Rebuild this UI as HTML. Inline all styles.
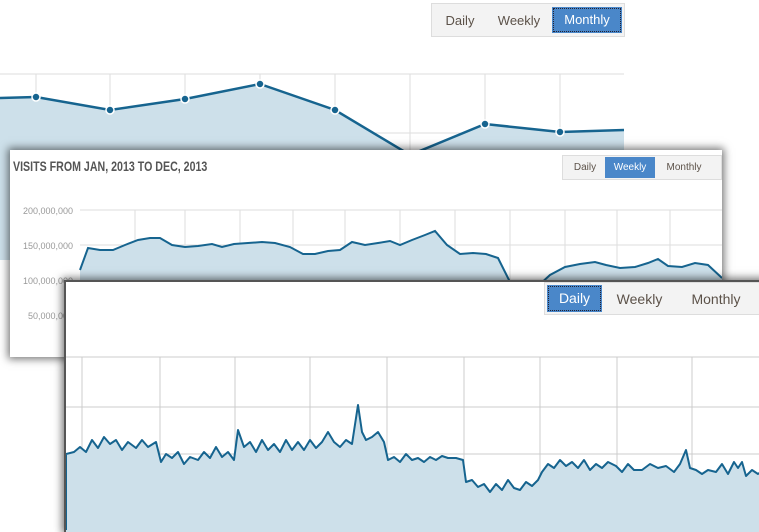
<!DOCTYPE html>
<html><head><style>
body{margin:0;width:759px;height:522px;overflow:hidden;background:#fff;font-family:"Liberation Sans",sans-serif;position:relative}
.btns{position:absolute;background:#f3f3f3;border:1px solid #ddd;display:flex;align-items:center;box-sizing:border-box}
.btns span{color:#5c5249;text-align:center;box-sizing:border-box}
.btns .a{background:#4a87c9;color:#fff;outline:1px dotted #223;outline-offset:-2px}
.panel{position:absolute;background:#fff;box-shadow:0 0 8px 2px rgba(0,0,0,.55)}
</style></head><body>
<svg style="position:absolute;left:0;top:0" width="624" height="260">
<g stroke="#ddd" stroke-width="1"><line x1="0" y1="74" x2="624" y2="74"/><line x1="0" y1="133" x2="624" y2="133"/><line x1="0" y1="192" x2="624" y2="192"/>
<line x1="36" y1="74" x2="36" y2="260"/><line x1="110" y1="74" x2="110" y2="260"/><line x1="185" y1="74" x2="185" y2="260"/><line x1="260" y1="74" x2="260" y2="260"/><line x1="335" y1="74" x2="335" y2="260"/><line x1="410" y1="74" x2="410" y2="260"/><line x1="485" y1="74" x2="485" y2="260"/><line x1="560" y1="74" x2="560" y2="260"/></g>
<path d="M0,98 L36,97 L110,110 L185,99 L260,84 L335,110 L410,155 L485,124 L560,132 L624,130 L624,260 L0,260Z" fill="#cde0ea"/>
<path d="M0,98 L36,97 L110,110 L185,99 L260,84 L335,110 L410,155 L485,124 L560,132 L624,130" fill="none" stroke="#16648f" stroke-width="2.5"/>
<g fill="#16648f" stroke="#fff" stroke-width="1.5"><circle cx="36" cy="97" r="4"/><circle cx="110" cy="110" r="4"/><circle cx="185" cy="99" r="4"/><circle cx="260" cy="84" r="4"/><circle cx="335" cy="110" r="4"/><circle cx="485" cy="124" r="4"/><circle cx="560" cy="132" r="4"/></g>
</svg>
<div class="btns" style="left:431px;top:3px;width:194px;height:34px;font-size:13px;padding-left:2px">
<span style="width:52px">Daily</span><span style="width:66px">Weekly</span><span class="a" style="width:70px;line-height:26px">Monthly</span></div>

<div class="panel" style="left:10px;top:150px;width:712px;height:207px">
<div style="position:absolute;left:3px;top:8px;font-weight:bold;font-size:14px;color:#555;transform:scaleX(.76);transform-origin:left">VISITS FROM JAN, 2013 TO DEC, 2013</div>
<div class="btns" style="left:552px;top:5px;width:160px;height:25px;font-size:10px;padding-left:2px">
<span style="width:40px">Daily</span><span class="a" style="width:50px;line-height:21px;outline:none">Weekly</span><span style="width:58px">Monthly</span></div>
<svg style="position:absolute;left:0;top:0" width="712" height="207">
<g font-size="9" fill="#999" text-anchor="end"><text x="63" y="64">200,000,000</text><text x="63" y="99">150,000,000</text><text x="63" y="134">100,000,000</text><text x="63" y="169">50,000,000</text></g>
<g stroke="#ddd"><line x1="70" y1="60" x2="712" y2="60"/><line x1="70" y1="95" x2="712" y2="95"/><line x1="70" y1="130" x2="712" y2="130"/>
<line x1="125" y1="60" x2="125" y2="207"/><line x1="175" y1="60" x2="175" y2="207"/><line x1="230" y1="60" x2="230" y2="207"/><line x1="283" y1="60" x2="283" y2="207"/><line x1="335" y1="60" x2="335" y2="207"/><line x1="390" y1="60" x2="390" y2="207"/><line x1="445" y1="60" x2="445" y2="207"/><line x1="500" y1="60" x2="500" y2="207"/><line x1="555" y1="60" x2="555" y2="207"/><line x1="607" y1="60" x2="607" y2="207"/><line x1="660" y1="60" x2="660" y2="207"/></g>
<path d="M70,120 L78,98 L90,100 L103,100 L115,95 L128,90 L140,88 L150,88 L162,95 L175,97 L188,96 L202,94 L212,97 L224,94 L238,93 L252,92 L265,93 L280,97 L293,104 L305,104 L318,101 L330,100 L342,92 L355,95 L368,93 L380,91 L390,95 L402,90 L415,85 L425,81 L437,95 L450,104 L463,103 L476,104 L488,108 L500,132 L515,148 L540,125 L555,117 L570,114 L585,112 L596,115 L610,118 L625,117 L638,113 L648,109 L658,116 L672,117 L685,113 L698,115 L712,128 L712,207 L70,207Z" fill="#cde0ea"/>
<path d="M70,120 L78,98 L90,100 L103,100 L115,95 L128,90 L140,88 L150,88 L162,95 L175,97 L188,96 L202,94 L212,97 L224,94 L238,93 L252,92 L265,93 L280,97 L293,104 L305,104 L318,101 L330,100 L342,92 L355,95 L368,93 L380,91 L390,95 L402,90 L415,85 L425,81 L437,95 L450,104 L463,103 L476,104 L488,108 L500,132 L515,148 L540,125 L555,117 L570,114 L585,112 L596,115 L610,118 L625,117 L638,113 L648,109 L658,116 L672,117 L685,113 L698,115 L712,128" fill="none" stroke="#16648f" stroke-width="2"/>
</svg>
</div>

<div class="panel" style="left:64px;top:280px;width:700px;height:250px;border-top:2px solid #555;border-left:2px solid #555">
<div class="btns" style="left:478px;top:0px;width:220px;height:33px;font-size:14px;padding-left:2px">
<span class="a" style="width:55px;line-height:27px">Daily</span><span style="width:75px">Weekly</span><span style="width:78px">Monthly</span></div>
<svg style="position:absolute;left:0;top:0" width="700" height="250">
<g stroke="#ccc"><line x1="0" y1="75" x2="700" y2="75"/><line x1="0" y1="125" x2="700" y2="125"/><line x1="0" y1="172" x2="700" y2="172"/><line x1="0" y1="222" x2="700" y2="222"/>
<line x1="16" y1="75" x2="16" y2="250"/><line x1="94" y1="75" x2="94" y2="250"/><line x1="169" y1="75" x2="169" y2="250"/><line x1="244" y1="75" x2="244" y2="250"/><line x1="321" y1="75" x2="321" y2="250"/><line x1="398" y1="75" x2="398" y2="250"/><line x1="474" y1="75" x2="474" y2="250"/><line x1="551" y1="75" x2="551" y2="250"/><line x1="626" y1="75" x2="626" y2="250"/></g>
<path d="M0,172 L8,170 L14,165 L20,170 L26,158 L32,166 L38,155 L44,162 L50,158 L56,168 L62,160 L70,166 L76,158 L82,165 L90,160 L95,180 L100,172 L106,176 L112,170 L118,182 L124,175 L132,178 L138,170 L144,176 L150,165 L156,175 L162,170 L168,178 L172,148 L178,165 L184,160 L190,170 L196,158 L202,168 L208,162 L214,170 L220,158 L226,168 L232,160 L238,168 L244,158 L250,166 L256,160 L262,150 L268,160 L274,165 L280,158 L286,162 L292,123 L296,150 L300,158 L306,155 L312,150 L318,160 L322,178 L328,175 L334,180 L340,172 L346,178 L352,176 L358,180 L364,175 L370,178 L376,174 L382,176 L390,176 L397,178 L400,200 L406,198 L412,205 L418,202 L424,210 L430,202 L436,208 L442,198 L448,206 L454,208 L460,200 L466,204 L472,198 L476,190 L482,182 L488,186 L494,178 L500,184 L506,180 L512,186 L518,178 L524,188 L530,182 L536,186 L542,180 L550,184 L556,190 L562,182 L568,188 L576,188 L584,182 L592,186 L600,184 L608,190 L614,182 L620,168 L624,186 L630,188 L636,192 L642,188 L650,190 L656,182 L662,192 L668,180 L672,186 L676,180 L680,194 L686,188 L692,192 L700,186 L700,250 L0,250Z" fill="#cde0ea" stroke="#16648f" stroke-width="2" stroke-linejoin="round"/>
<rect x="0" y="248" width="700" height="3" fill="#cde0ea"/>
</svg>
</div>
</body></html>
